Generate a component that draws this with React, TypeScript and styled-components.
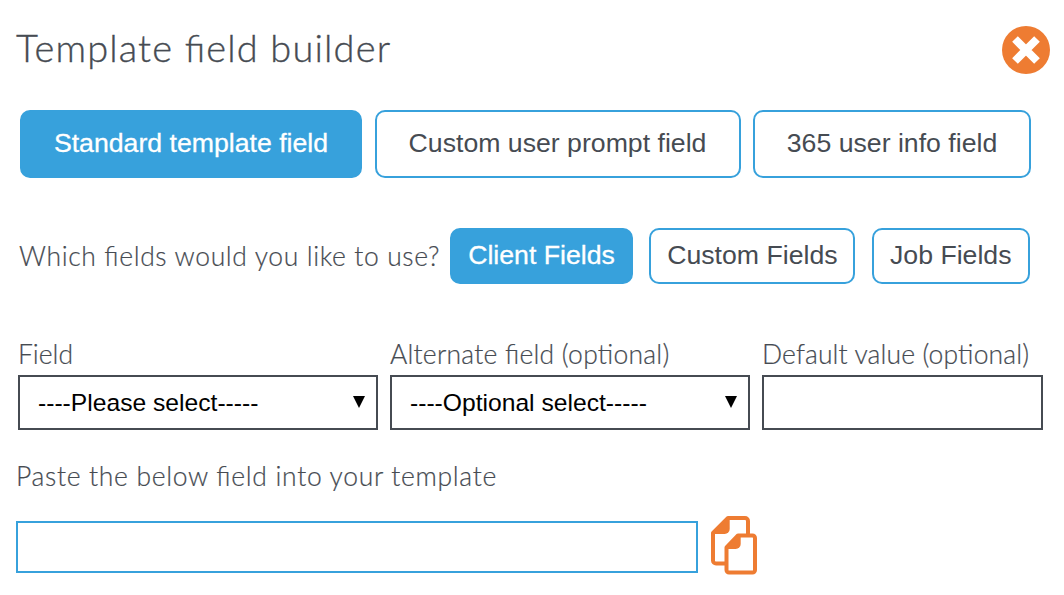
import React from 'react';
import styled, { createGlobalStyle } from 'styled-components';

const BLUE = '#37a1dc';
const SLATE = '#464b52';
const ORANGE = '#ee7c32';

const GlobalStyle = createGlobalStyle`
  * { box-sizing: border-box; }
  body { margin: 0; background: #fff; }
`;

const Page = styled.main`
  width: 1064px;
  height: 595px;
  padding: 26px 14px 0 16px;
  overflow: hidden;
  background: #fff;
  color: ${SLATE};
  font-family: 'Liberation Sans', Arial, sans-serif;
`;

const Header = styled.header`
  display: flex;
  align-items: flex-start;
  justify-content: space-between;
  height: 84px;
`;

const LightText = styled.span<{ $size?: number; $spacing?: number }>`
  font-family: Lato, Carlito, sans-serif;
  font-weight: 300;
  font-size: ${p => p.$size ?? 26.5}px;
  line-height: 32px;
  letter-spacing: ${p => p.$spacing ?? 0}px;
  font-feature-settings: 'liga' 1;
  -webkit-text-stroke: 0.2px ${SLATE};
  white-space: nowrap;
`;

const Title = styled(LightText).attrs({ as: 'h1' })`
  margin: 0;
  line-height: 42px;
  -webkit-text-stroke-width: 0.35px;
`;

const IconButton = styled.button`
  display: block;
  padding: 0;
  border: 0;
  background: none;
  svg { display: block; }
`;

const Tabs = styled.nav`
  display: flex;
  padding-left: 4px;
  gap: 12.5px;
  height: 118px;
`;

const Pill = styled.button<{ $active?: boolean; $width: number; $height: number }>`
  flex: none;
  width: ${p => p.$width}px;
  height: ${p => p.$height}px;
  padding: 0 0 2px;
  border: 2px solid ${BLUE};
  border-radius: 10px;
  background: ${p => (p.$active ? BLUE : '#fff')};
  color: ${p => (p.$active ? '#fff' : SLATE)};
  font-family: inherit;
  font-size: 26.67px;
  line-height: 30px;
  white-space: nowrap;
  -webkit-text-stroke: ${p => (p.$active ? '0.3px #fff' : '0')};
`;

const FieldKinds = styled.section`
  display: flex;
  align-items: center;
  height: 56px;
  padding-left: 3px;
`;

const Question = styled(LightText)`
  width: 431px;
`;

const KindButtons = styled.div`
  display: flex;
  gap: 16.4px;
`;

const FormRow = styled.section`
  display: grid;
  grid-template-columns: 360px 360px 281px;
  column-gap: 12px;
  margin-top: 54px;
  padding-left: 2px;
`;

const Field = styled.label`
  display: flex;
  flex-direction: column;
  gap: 5px;
`;

const SelectBox = styled.div`
  display: flex;
  align-items: center;
  justify-content: space-between;
  height: 55px;
  padding: 0 11px 0 18px;
  border: 2px solid ${SLATE};
  color: #000;
  font-size: 24.65px;
  white-space: nowrap;
  svg { margin-bottom: 2px; }
`;

const TextInput = styled.input`
  width: 100%;
  height: 55px;
  border: 2px solid ${SLATE};
  border-radius: 0;
  background: #fff;
`;

const Instruction = styled(LightText).attrs({ as: 'p' })`
  margin: 30px 0 23px;
`;

const OutputRow = styled.section`
  display: flex;
  gap: 12px;
`;

const OutputInput = styled.input`
  width: 682px;
  height: 52px;
  margin-top: 6px;
  border: 2px solid ${BLUE};
  border-radius: 0;
  background: #fff;
`;

const CloseIcon = () => (
  <svg width="48" height="48" viewBox="0 0 48 48">
    <circle cx="24" cy="24" r="24" fill={ORANGE} />
    <path d="M13 13 35 35M35 13 13 35" stroke="#fff" strokeWidth="8" />
  </svg>
);

const CopyIcon = () => (
  <svg width="48" height="60" viewBox="0 0 48 60" fill="none" stroke={ORANGE} strokeWidth="4" strokeLinejoin="round">
    <path d="M18 3H35a3 3 0 0 1 3 3V46a2.500 2.500 0 0 1-2.500 2.500H6a3 3 0 0 1-3-3V18Z" />
    <path d="M3 19 18 3h1.700v11a5 5 0 0 1-5 5Z" fill={ORANGE} stroke="none" />
    <path d="M28 20.500H42.500a2.500 2.500 0 0 1 2.500 2.500V55a2.500 2.500 0 0 1-2.500 2.500H19a2.500 2.500 0 0 1-2.500-2.500V32.500Z" fill="#fff" />
    <path d="M16.500 34V32L28 20.500h2.700V29a5 5 0 0 1-5 5Z" fill={ORANGE} stroke="none" />
  </svg>
);

const Caret = () => (
  <svg width="12" height="12" viewBox="0 0 12 12">
    <path d="M0 0H12L6 12Z" fill="#000" />
  </svg>
);

export default function App() {
  return (
    <Page>
      <GlobalStyle />
      <Header>
        <Title $size={38} $spacing={1.15}>Template field builder</Title>
        <IconButton aria-label="Close"><CloseIcon /></IconButton>
      </Header>
      <Tabs>
        <Pill $active $width={342} $height={68}>Standard template field</Pill>
        <Pill $width={366} $height={68}>Custom user prompt field</Pill>
        <Pill $width={278} $height={68}>365 user info field</Pill>
      </Tabs>
      <FieldKinds>
        <Question $spacing={0.62}>Which fields would you like to use?</Question>
        <KindButtons>
          <Pill $active $width={183} $height={56}>Client Fields</Pill>
          <Pill $width={206} $height={56}>Custom Fields</Pill>
          <Pill $width={158} $height={56}>Job Fields</Pill>
        </KindButtons>
      </FieldKinds>
      <FormRow>
        <Field>
          <LightText>Field</LightText>
          <SelectBox>----Please select-----<Caret /></SelectBox>
        </Field>
        <Field>
          <LightText $spacing={0.23}>Alternate field (optional)</LightText>
          <SelectBox>----Optional select-----<Caret /></SelectBox>
        </Field>
        <Field>
          <LightText $spacing={0.12}>Default value (optional)</LightText>
          <TextInput aria-label="Default value" />
        </Field>
      </FormRow>
      <Instruction $spacing={0.68}>Paste the below field into your template</Instruction>
      <OutputRow>
        <OutputInput aria-label="Generated field" readOnly />
        <IconButton aria-label="Copy"><CopyIcon /></IconButton>
      </OutputRow>
    </Page>
  );
}
